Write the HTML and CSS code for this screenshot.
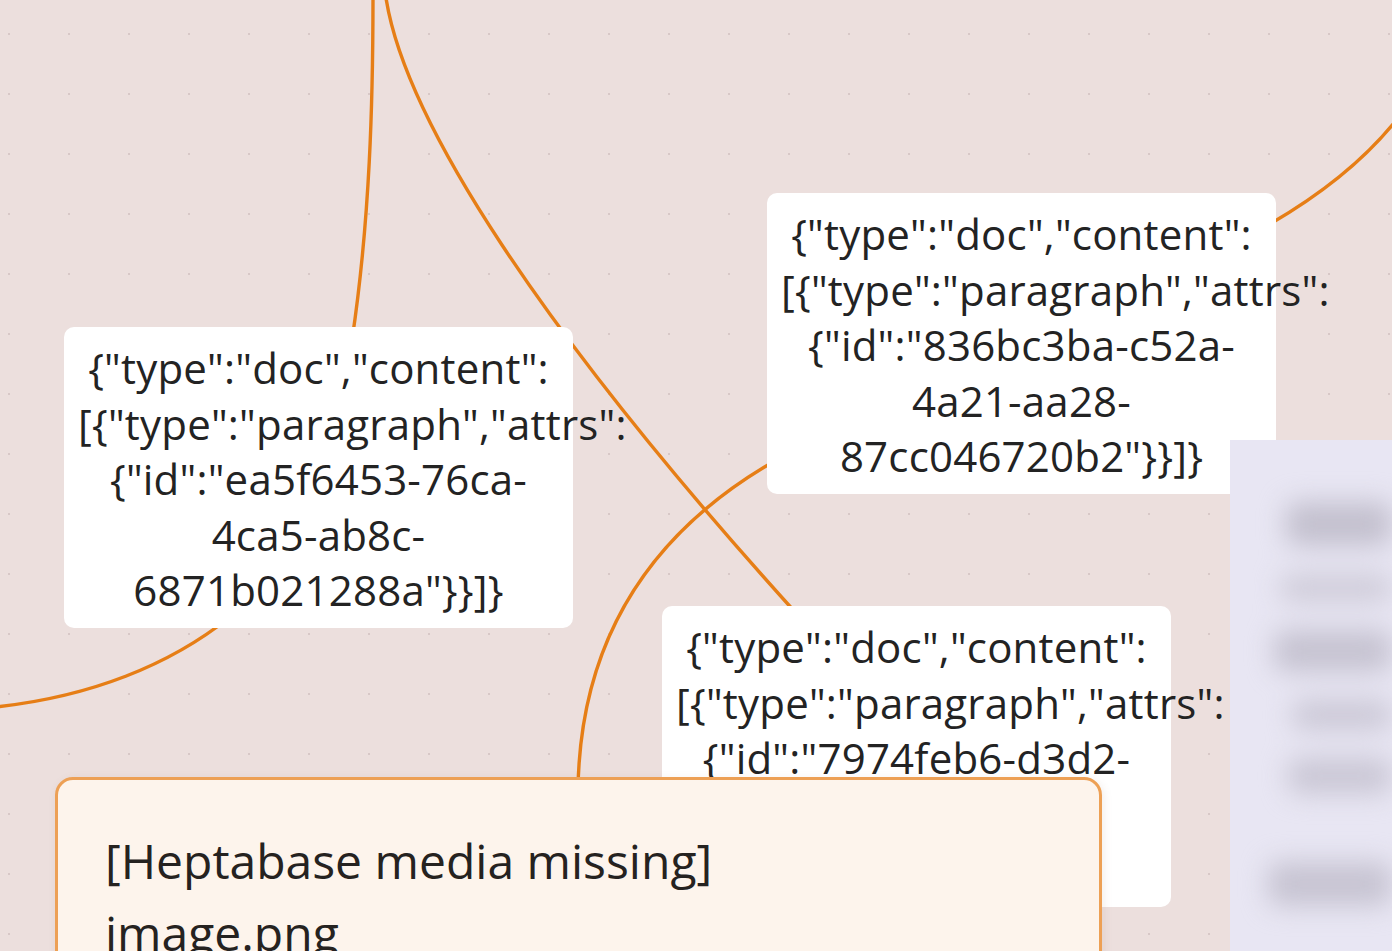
FILE: index.html
```html
<!DOCTYPE html>
<html lang="en">
<head>
<meta charset="utf-8">
<title>Whiteboard</title>
<link rel="stylesheet" href="styles.css">
</head>
<body>
<main class="canvas">
  <svg class="edges" width="1392" height="951" viewBox="0 0 1392 951" aria-hidden="true">
    <path d="M 373 -5 C 373 100, 370 220, 352 340"/>
    <path d="M 386 -2 C 405 120, 540 330, 795 612"/>
    <path d="M 230 617 C 170 665, 90 697, -5 707"/>
    <path d="M 1270 224 C 1320 195, 1365 160, 1398 118"/>
    <path d="M 780 458 C 660 525, 580 630, 578 790"/>
  </svg>

  <article class="card json card-a">
    <p>{"type":"doc","content":<br>[{"type":"paragraph","attrs":<br>{"id":"ea5f6453-76ca-<br>4ca5-ab8c-<br>6871b021288a"}}]}</p>
  </article>

  <article class="card json card-b">
    <p>{"type":"doc","content":<br>[{"type":"paragraph","attrs":<br>{"id":"836bc3ba-c52a-<br>4a21-aa28-<br>87cc046720b2"}}]}</p>
  </article>

  <article class="card json card-c">
    <p>{"type":"doc","content":<br>[{"type":"paragraph","attrs":<br>{"id":"7974feb6-d3d2-</p>
  </article>

  <article class="card media">
    <p>[Heptabase media missing]<br>image.png</p>
  </article>

  <aside class="panel" aria-hidden="true">
    <div class="panel-blur">
      <span class="bar bar-1"></span>
      <span class="bar bar-2"></span>
      <span class="bar bar-3"></span>
      <span class="bar bar-4"></span>
      <span class="bar bar-5"></span>
      <span class="gap"></span>
      <span class="bar bar-6"></span>
    </div>
  </aside>
</main>
</body>
</html>
```

FILE: styles.css
```css
html, body {
  margin: 0;
  padding: 0;
  width: 1392px;
  height: 951px;
  overflow: hidden;
}

body {
  font-family: "Open Sans", "Noto Sans", "Liberation Sans", sans-serif;
  color: #222;
  background: #ecdfdd;
}

.canvas {
  position: relative;
  width: 1392px;
  height: 951px;
  overflow: hidden;
  background-color: #ecdfdd;
  background-image: radial-gradient(circle, #d8c8c7 0.9px, transparent 1.4px);
  background-size: 60px 60px;
  background-position: -21px 4px;
}

.edges {
  position: absolute;
  left: 0;
  top: 0;
  fill: none;
  stroke: #e67e16;
  stroke-width: 3.4;
  stroke-linecap: round;
}

.card {
  position: absolute;
  box-sizing: border-box;
  margin: 0;
}

.card p {
  margin: 0;
}

.json {
  width: 509px;
  height: 301px;
  padding: 13px 14px 10px 14px;
  background: #ffffff;
  border-radius: 10px;
  text-align: center;
  font-size: 42px;
  line-height: 55.5px;
  letter-spacing: 0.2px;
  color: #232323;
  white-space: nowrap;
}

.card-a { left: 64px;  top: 327px; }
.card-b { left: 767px; top: 193px; }
.card-c { left: 662px; top: 606px; }

.media {
  left: 55px;
  top: 777px;
  width: 1047px;
  height: 260px;
  padding: 45px 47px;
  background: #fdf4ec;
  border: 3.5px solid #eda055;
  border-radius: 18px;
  box-shadow: 2px 2px 8px rgba(150, 110, 80, 0.12);
  font-size: 48px;
  line-height: 72px;
  letter-spacing: 0;
  color: #252220;
}

.panel {
  position: absolute;
  left: 1230px;
  top: 440px;
  width: 162px;
  height: 511px;
  background: #e8e6f3;
  overflow: hidden;
}

.panel-blur {
  display: flex;
  flex-direction: column;
  gap: 28px;
  padding: 62px 0 0 58px;
  filter: blur(13px);
}

.bar {
  display: block;
  height: 36px;
  background: #c7c4d2;
  border-radius: 12px;
}

.bar-1 { height: 44px; margin-left: -2px; background: #c3c0ce; }
.bar-2 { height: 28px; margin-left: -8px; background: #cfccd9; }
.bar-3 { height: 42px; margin-left: -14px; background: #c6c3d1; }
.bar-4 { height: 30px; margin-left: 4px; background: #cbc8d6; }
.bar-5 { height: 36px; margin-left: 0; background: #cac7d5; }
.gap   { display: block; height: 12px; }
.bar-6 { height: 44px; margin-left: -20px; background: #c7c4d2; }
```
